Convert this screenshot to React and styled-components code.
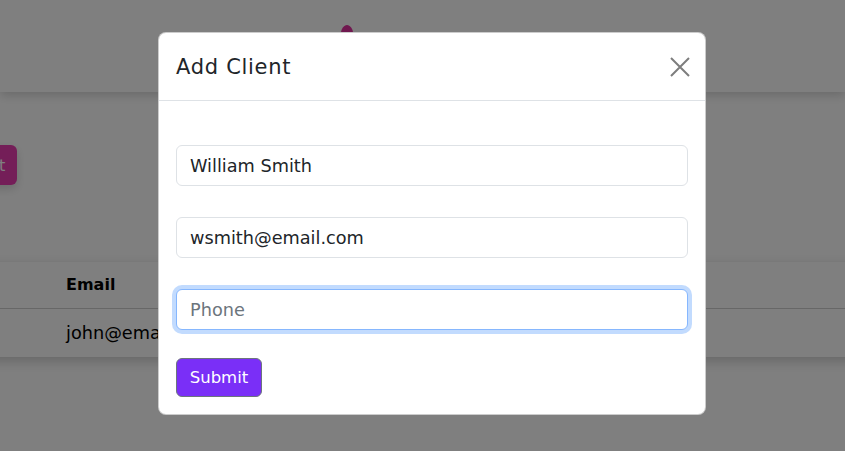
import styled, { createGlobalStyle } from "styled-components";

const FONT = `"DejaVu Sans", Inter, sans-serif`;

const GlobalStyle = createGlobalStyle`
  html, body {
    margin: 0;
    padding: 0;
    background: #ffffff;
    overflow: hidden;
    font-family: ${FONT};
    color: #212529;
  }
  * { box-sizing: border-box; }
`;

const Page = styled.div`
  width: 845px;
  height: 451px;
  position: relative;
  overflow: hidden;
`;

const TopBar = styled.header`
  height: 92px;
  background: #fff;
  box-shadow: 0 3px 10px rgba(0, 0, 0, 0.18);
  display: flex;
  align-items: flex-start;
  padding: 25px 0 0 340px;
`;

const Main = styled.main`
  margin-left: -140px;
  padding-top: 53px;
`;

const ActionRow = styled.div`
  display: flex;
  gap: 12px;
`;

const PinkBtn = styled.button`
  height: 40px;
  padding: 0 12px;
  border: none;
  border-radius: 6px;
  background: #e93cb0;
  color: #fff;
  font: 400 16px ${FONT};
  box-shadow: 0 4px 10px rgba(0, 0, 0, 0.15);
  margin-left: 51px;
`;

const TableCard = styled.div`
  margin-top: 77px;
  width: 1200px;
  background: #fff;
  box-shadow: 0 4px 12px rgba(0, 0, 0, 0.2);
`;

const Table = styled.table`
  border-collapse: collapse;
  width: 100%;
`;

const Th = styled.th`
  text-align: left;
  font-size: 16px;
  font-weight: 700;
  height: 46px;
  padding: 0 8px;
  width: ${(p) => p.$w || "auto"};
  border-bottom: 1px solid #cfcfcf;
  color: #000;
`;

const Td = styled.td`
  font-size: 17.7px;
  height: 49px;
  padding: 0 8px;
  color: #000;
`;

const Backdrop = styled.div`
  position: absolute;
  inset: 0;
  background: rgba(0, 0, 0, 0.5);
  padding: 32px 0 0 158px;
`;

const Modal = styled.div`
  width: 548px;
  height: 383px;
  background: #fff;
  border: 1px solid rgba(0, 0, 0, 0.2);
  border-radius: 8px;
  display: flex;
  flex-direction: column;
`;

const ModalHeader = styled.div`
  height: 68px;
  flex-shrink: 0;
  display: flex;
  align-items: center;
  justify-content: space-between;
  padding: 0 13px 0 17px;
  border-bottom: 1px solid #dee2e6;
`;

const Title = styled.h5`
  margin: 0;
  font-size: 21px;
  font-weight: 400;
  letter-spacing: 0.7px;
  color: #212529;
`;

const CloseBtn = styled.button`
  width: 24px;
  height: 24px;
  padding: 0;
  border: none;
  background: transparent;
  display: flex;
  align-items: center;
  justify-content: center;
`;

const ModalBody = styled.form`
  padding: 44px 17px 0 17px;
  display: flex;
  flex-direction: column;
`;

const Field = styled.input`
  height: 41px;
  width: 512px;
  border: 1px solid ${(p) => (p.$focus ? "#86b7fe" : "#dee2e6")};
  border-radius: 6px;
  padding: 0 13px;
  font: 400 17.7px ${FONT};
  color: #212529;
  margin-bottom: ${(p) => p.$mb || "31px"};
  outline: none;
  box-shadow: ${(p) => (p.$focus ? "0 0 0 4px rgba(13, 110, 253, 0.25)" : "none")};
  &::placeholder { color: #6c757d; }
`;

const SubmitBtn = styled.button`
  align-self: flex-start;
  width: 86px;
  height: 39px;
  padding: 0;
  border: 1px solid #6c757d;
  border-radius: 6px;
  background: #7a2ff7;
  color: #fff;
  font: 400 16.5px ${FONT};
`;

const Logo = () => (
  <svg width="14" height="30" viewBox="0 0 14 30">
    <path d="M7 0 C4 0 1 4 1 8 L7 30 L13 8 C13 4 10 0 7 0 Z" fill="#e0309f" />
  </svg>
);

export default function App() {
  return (
    <Page>
      <GlobalStyle />
      <TopBar>
        <Logo />
      </TopBar>
      <Main>
        <ActionRow>
          <PinkBtn>Add Client</PinkBtn>
        </ActionRow>
        <TableCard>
          <Table>
            <thead>
              <tr>
                <Th $w="198px">Name</Th>
                <Th $w="400px">Email</Th>
                <Th>Phone</Th>
              </tr>
            </thead>
            <tbody>
              <tr>
                <Td>John Doe</Td>
                <Td>john@email.com</Td>
                <Td>555-555-5555</Td>
              </tr>
            </tbody>
          </Table>
        </TableCard>
      </Main>
      <Backdrop>
        <Modal>
          <ModalHeader>
            <Title>Add Client</Title>
            <CloseBtn aria-label="Close">
              <svg width="22" height="22" viewBox="0 0 22 22">
                <path d="M2 2 L20 20 M20 2 L2 20" stroke="#7d7d7d" strokeWidth="2" />
              </svg>
            </CloseBtn>
          </ModalHeader>
          <ModalBody onSubmit={(e) => e.preventDefault()}>
            <Field defaultValue="William Smith" />
            <Field defaultValue="wsmith@email.com" />
            <Field placeholder="Phone" $focus $mb="28px" />
            <SubmitBtn type="submit">Submit</SubmitBtn>
          </ModalBody>
        </Modal>
      </Backdrop>
    </Page>
  );
}
